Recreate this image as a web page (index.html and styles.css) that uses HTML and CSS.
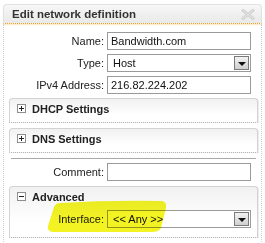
FILE: index.html
```html
<!DOCTYPE html>
<html>
<head>
<meta charset="utf-8">
<link rel="stylesheet" href="styles.css">
</head>
<body>
<div class="dialog">
  <div class="titlebar">
    <span class="title">Edit network definition</span>
    <svg class="close" width="14" height="11" viewBox="0 0 14 11">
      <path d="M2 1.5 L12 9.5 M12 1.5 L2 9.5" stroke="#d2d2d2" stroke-width="3" stroke-linecap="round"/>
      <path d="M2 1.5 L12 9.5 M12 1.5 L2 9.5" stroke="#e6e6e6" stroke-width="1"/>
    </svg>
  </div>
  <div class="body">
    <div class="form">
      <label class="lbl">Name:</label>
      <input class="field" value="Bandwidth.com">
      <label class="lbl">Type:</label>
      <div class="select"><span class="val">Host</span><span class="btn"><span class="tri"></span></span></div>
      <label class="lbl">IPv4 Address:</label>
      <input class="field" value="216.82.224.202">
    </div>
    <div class="section">
      <div class="sec-head"><span class="toggle plus"></span>DHCP Settings</div>
    </div>
    <div class="section">
      <div class="sec-head"><span class="toggle plus"></span>DNS Settings</div>
    </div>
    <div class="sep"></div>
    <div class="form comment">
      <label class="lbl">Comment:</label>
      <input class="field" value="">
    </div>
    <div class="section open">
      <div class="sec-head"><span class="toggle minus"></span>Advanced</div>
      <div class="form inner">
        <label class="lbl">Interface:</label>
        <div class="select"><span class="val">&lt;&lt; Any &gt;&gt;</span><span class="btn"><span class="tri"></span></span></div>
      </div>
    </div>
  </div>
</div>
<svg class="highlight" width="265" height="243" viewBox="0 0 265 243">
  <path d="M60 203 Q110 200 162 201 Q167 202 166 208 L161 228 Q159 232 152 232 L54 232 Q47 232 48 226 L54 207 Q56 203 60 203 Z" fill="#f3f324"/>
</svg>
</body>
</html>
```
FILE: styles.css
```css
* { box-sizing: border-box; }
html, body { margin: 0; padding: 0; background: #fff; }
body {
  position: relative;
  width: 265px;
  height: 243px;
  overflow: hidden;
  font-family: "Liberation Sans", Arial, sans-serif;
  font-size: 11px;
  color: #222;
}
.dialog {
  margin: 4px 0 0 3px;
  width: 259px;
}
.titlebar {
  height: 20px;
  display: flex;
  align-items: center;
  justify-content: space-between;
  padding: 0 6px 0 8px;
  border: 1px solid #e2e2e2;
  border-bottom: 1px dotted #f0a018;
  border-radius: 4px 4px 0 0;
  background: linear-gradient(#f7f7f7, #e9e9e9);
  box-shadow: 0 1px 1px rgba(250, 190, 90, 0.35);
}
.title {
  font-weight: bold;
  font-size: 11.5px;
  color: #333;
}
.close { display: block; }
.body {
  border-left: 1px dotted #cfcfcf;
  border-right: 1px dotted #cfcfcf;
  padding-top: 8px;
  height: 220px;
}
.form {
  display: grid;
  grid-template-columns: 100px 144px;
  column-gap: 3px;
  row-gap: 4px;
  grid-auto-rows: 18px;
  align-items: center;
}
.lbl {
  text-align: right;
  color: #222;
}
.field {
  height: 18px;
  width: 144px;
  margin: 0;
  padding: 0 3px;
  border: 1px solid #9a9a9a;
  background: #fff;
  font-family: "Liberation Sans", Arial, sans-serif;
  font-size: 11px;
  color: #111;
  outline: none;
}
.select {
  height: 18px;
  display: flex;
  align-items: center;
  justify-content: space-between;
  padding: 0 1px 0 5px;
  border: 1px solid #9a9a9a;
  background: #fff;
  color: #111;
}
.btn {
  width: 15px;
  height: 14px;
  display: flex;
  align-items: center;
  justify-content: center;
  padding-top: 2px;
  border: 1px solid #7a7a7a;
  background: linear-gradient(#f2f2f2, #cfcfcf);
}
.tri {
  width: 0;
  height: 0;
  border-left: 4px solid transparent;
  border-right: 4px solid transparent;
  border-top: 4px solid #111;
}
.section {
  margin: 4px 0 0 5px;
  width: 249px;
  border: 1px solid #d3d3d3;
  border-bottom: 1px dotted #b5b5b5;
  border-radius: 4px 4px 0 0;
  background: linear-gradient(#f1f1f1, #ffffff 70%);
  box-shadow: 1px 0 0 #ececec;
  padding-bottom: 4px;
}
.section + .section { margin-top: 5px; }
.sec-head {
  height: 19px;
  display: flex;
  align-items: center;
  gap: 6px;
  padding-left: 7px;
  font-weight: bold;
  font-size: 11px;
  color: #222;
}
.toggle {
  position: relative;
  width: 9px;
  height: 9px;
  border: 1px solid #8e8e8e;
  background: #fff;
}
.toggle::before {
  content: "";
  position: absolute;
  left: 1px;
  top: 3px;
  width: 5px;
  height: 1px;
  background: #222;
}
.plus::after {
  content: "";
  position: absolute;
  left: 3px;
  top: 1px;
  width: 1px;
  height: 5px;
  background: #222;
}
.sep {
  margin: 5px 5px 0 7px;
  height: 1px;
  background: #a8a8a8;
}
.comment { margin-top: 4px; }
.section.open {
  margin-top: 5px;
  padding-bottom: 9px;
}
.inner {
  margin-top: 4px;
  grid-template-columns: 94px 144px;
}
.highlight {
  position: absolute;
  left: 0;
  top: 0;
  pointer-events: none;
  mix-blend-mode: multiply;
}
```
